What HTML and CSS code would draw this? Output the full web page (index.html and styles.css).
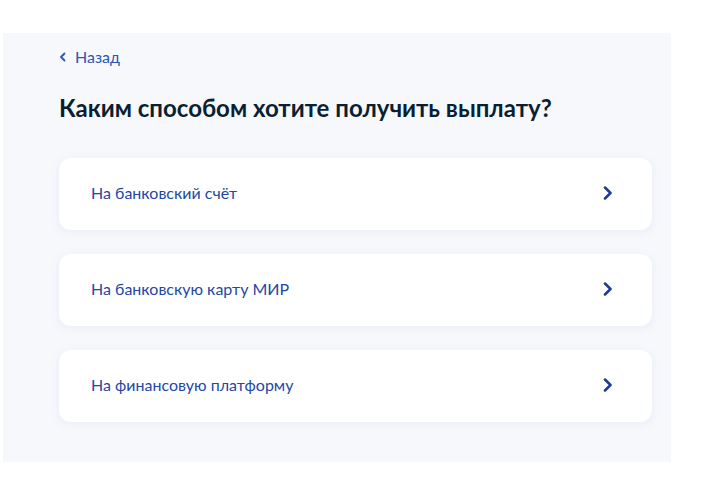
FILE: index.html
```html
<!DOCTYPE html>
<html lang="ru">
<head>
<meta charset="utf-8">
<link rel="stylesheet" href="styles.css">
</head>
<body>
<div class="panel">
  <a class="back" href="#">
    <svg class="back-icon" width="8" height="10" viewBox="0 0 8 10"><path d="M5.5 1.5 L2 5 L5.5 8.5" fill="none" stroke="#2a54b8" stroke-width="1.8" stroke-linecap="round" stroke-linejoin="round"/></svg>
    <span>Назад</span>
  </a>
  <h1 class="title">Каким способом хотите получить выплату?</h1>
  <div class="options">
    <a class="option" href="#"><span>На банковский счёт</span>
      <svg class="chev" width="12" height="14" viewBox="0 0 12 14"><path d="M3 1.5 L8.5 7 L3 12.5" fill="none" stroke="#1d3b94" stroke-width="2.5" stroke-linecap="round" stroke-linejoin="round"/></svg></a>
    <a class="option" href="#"><span>На банковскую карту МИР</span>
      <svg class="chev" width="12" height="14" viewBox="0 0 12 14"><path d="M3 1.5 L8.5 7 L3 12.5" fill="none" stroke="#1d3b94" stroke-width="2.5" stroke-linecap="round" stroke-linejoin="round"/></svg></a>
    <a class="option" href="#"><span>На финансовую платформу</span>
      <svg class="chev" width="12" height="14" viewBox="0 0 12 14"><path d="M3 1.5 L8.5 7 L3 12.5" fill="none" stroke="#1d3b94" stroke-width="2.5" stroke-linecap="round" stroke-linejoin="round"/></svg></a>
  </div>
</div>
</body>
</html>
```
FILE: styles.css
```css
* { box-sizing: border-box; }
html, body { margin: 0; padding: 0; background: #ffffff; }
body {
  font-family: Lato, "Noto Sans", sans-serif;
  padding: 33px 0 0 3px;
  width: 710px;
  height: 486px;
}
.panel {
  width: 668px;
  height: 429px;
  background: #f6f8fc;
  padding: 13px 19px 0 56px;
}
.back {
  display: inline-flex;
  align-items: center;
  gap: 8px;
  text-decoration: none;
  color: #2a54b8;
  font-size: 16px;
  line-height: 20px;
}
.back-icon { display: block; }
.title {
  margin: 26px 0 0 0;
  font-size: 24px;
  line-height: 30px;
  font-weight: 700;
  color: #0b1f33;
}
.options {
  margin-top: 35px;
  display: flex;
  flex-direction: column;
  gap: 24px;
}
.option {
  display: flex;
  align-items: center;
  justify-content: space-between;
  height: 72px;
  padding: 0 38px 3px 32px;
  background: #ffffff;
  border-radius: 12px;
  box-shadow: 0 2px 10px rgba(170, 185, 215, 0.18);
  text-decoration: none;
  color: #2348a3;
  font-size: 16px;
}
.chev { display: block; margin-top: 1px; }
```
